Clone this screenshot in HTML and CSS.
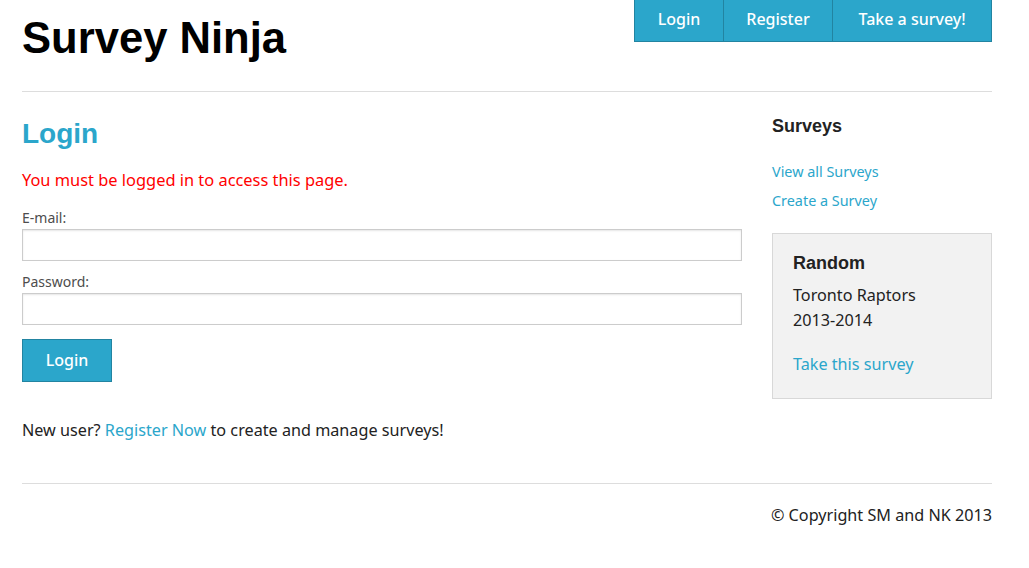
FILE: index.html
```html
<!DOCTYPE html>
<html>
<head>
<meta charset="utf-8">
<link rel="stylesheet" href="styles.css">
</head>
<body>
<div class="container">
  <header class="header">
    <h1 class="site-title">Survey Ninja</h1>
    <nav class="topnav">
      <a class="navbtn" href="#">Login</a>
      <a class="navbtn" href="#">Register</a>
      <a class="navbtn" href="#">Take a survey!</a>
    </nav>
  </header>
  <hr class="rule">
  <div class="main">
    <div class="content">
      <h2 class="page-title">Login</h2>
      <p class="error">You must be logged in to access this page.</p>
      <form class="form">
        <label class="label">E-mail:</label>
        <input class="input" type="text">
        <label class="label">Password:</label>
        <input class="input" type="password">
        <button class="btn" type="button">Login</button>
      </form>
      <p class="note">New user? <a href="#">Register Now</a> to create and manage surveys!</p>
    </div>
    <aside class="sidebar">
      <h3 class="side-title">Surveys</h3>
      <ul class="side-links">
        <li><a href="#">View all Surveys</a></li>
        <li><a href="#">Create a Survey</a></li>
      </ul>
      <div class="panel">
        <h3 class="panel-title">Random</h3>
        <p class="panel-text">Toronto Raptors<br>2013-2014</p>
        <a class="panel-link" href="#">Take this survey</a>
      </div>
    </aside>
  </div>
  <hr class="rule footer-rule">
  <footer class="footer">© Copyright SM and NK 2013</footer>
</div>
</body>
</html>
```
FILE: styles.css
```css
html, body { margin: 0; padding: 0; background: #fff; }
body {
  font-family: "Noto Sans", "DejaVu Sans", sans-serif;
  color: #222;
  font-size: 15px;
}
a { color: #2ba6cb; text-decoration: none; }
.container { width: 970px; margin-left: 22px; }
.header { display: flex; justify-content: space-between; align-items: flex-start; height: 91px; }
.site-title {
  font-family: "Liberation Sans", Arial, sans-serif;
  font-weight: bold; font-size: 43.6px; margin: 12px 0 0 0; color: #000; line-height: 52px;
}
.topnav { display: flex; background: #2ba6cb; border: 1px solid #2284a1; border-top: none; height: 41px; }
.navbtn {
  color: #fff; display: flex; align-items: center; justify-content: center;
  font-size: 16px; font-weight: 500; height: 41px; box-sizing: border-box; padding-bottom: 4px;
  border-left: 1px solid #2284a1;
}
.navbtn:first-child { border-left: none; width: 88px; }
.navbtn:nth-child(2) { width: 109px; }
.navbtn:nth-child(3) { width: 159px; }
.rule { border: 0; border-top: 1px solid #ddd; margin: 0; }
.main { display: flex; gap: 30px; padding-top: 16px; min-height: 375px; }
.content { width: 720px; }
.page-title {
  font-family: "Liberation Sans", Arial, sans-serif; color: #2ba6cb;
  font-size: 28px; font-weight: bold; margin: 9px 0 0; line-height: 34px;
}
.error { color: #f00; font-size: 16.4px; margin: 18px 0 0; line-height: 22px; }
.form { display: flex; flex-direction: column; margin-top: 17px; }
.label { font-size: 14px; color: #4d4d4d; line-height: 20px; margin-bottom: 1px; }
.input {
  box-sizing: border-box; width: 720px; height: 32px; border: 1px solid #ccc;
  box-shadow: inset 0 1px 2px rgba(0,0,0,0.1); margin: 0 0 11px; padding: 0 8px;
}
.btn {
  box-sizing: border-box; width: 90px; height: 43px; margin-top: 3px;
  background: #2ba6cb; border: 1px solid #2284a1; color: #fff;
  font-family: inherit; font-size: 16px; font-weight: 500; padding-bottom: 3px;
}
.note { font-size: 16.2px; margin: 37px 0 0; line-height: 22px; }
.sidebar { width: 220px; padding-top: 6px; }
.side-title {
  font-family: "Liberation Sans", Arial, sans-serif; font-size: 18px;
  font-weight: bold; margin: 0; line-height: 24px; color: #222;
}
.side-links { list-style: none; margin: 24px 0 0; padding: 0; font-size: 14.4px; }
.side-links li { line-height: 20px; margin-bottom: 9px; }
.panel {
  margin-top: 22px; background: #f2f2f2; border: 1px solid #d8d8d8;
  padding: 17px 20px 23px; box-sizing: border-box;
}
.panel-title {
  font-family: "Liberation Sans", Arial, sans-serif; font-size: 18px;
  font-weight: bold; margin: 0; line-height: 24px; color: #222;
}
.panel-text { font-size: 16.2px; line-height: 25px; margin: 8px 0 0; }
.panel-link { display: block; font-size: 16.2px; margin-top: 20px; line-height: 22px; }
.footer-rule { margin-top: 0; }
.footer { text-align: right; font-size: 16.2px; padding-top: 20px; line-height: 22px; }
```
